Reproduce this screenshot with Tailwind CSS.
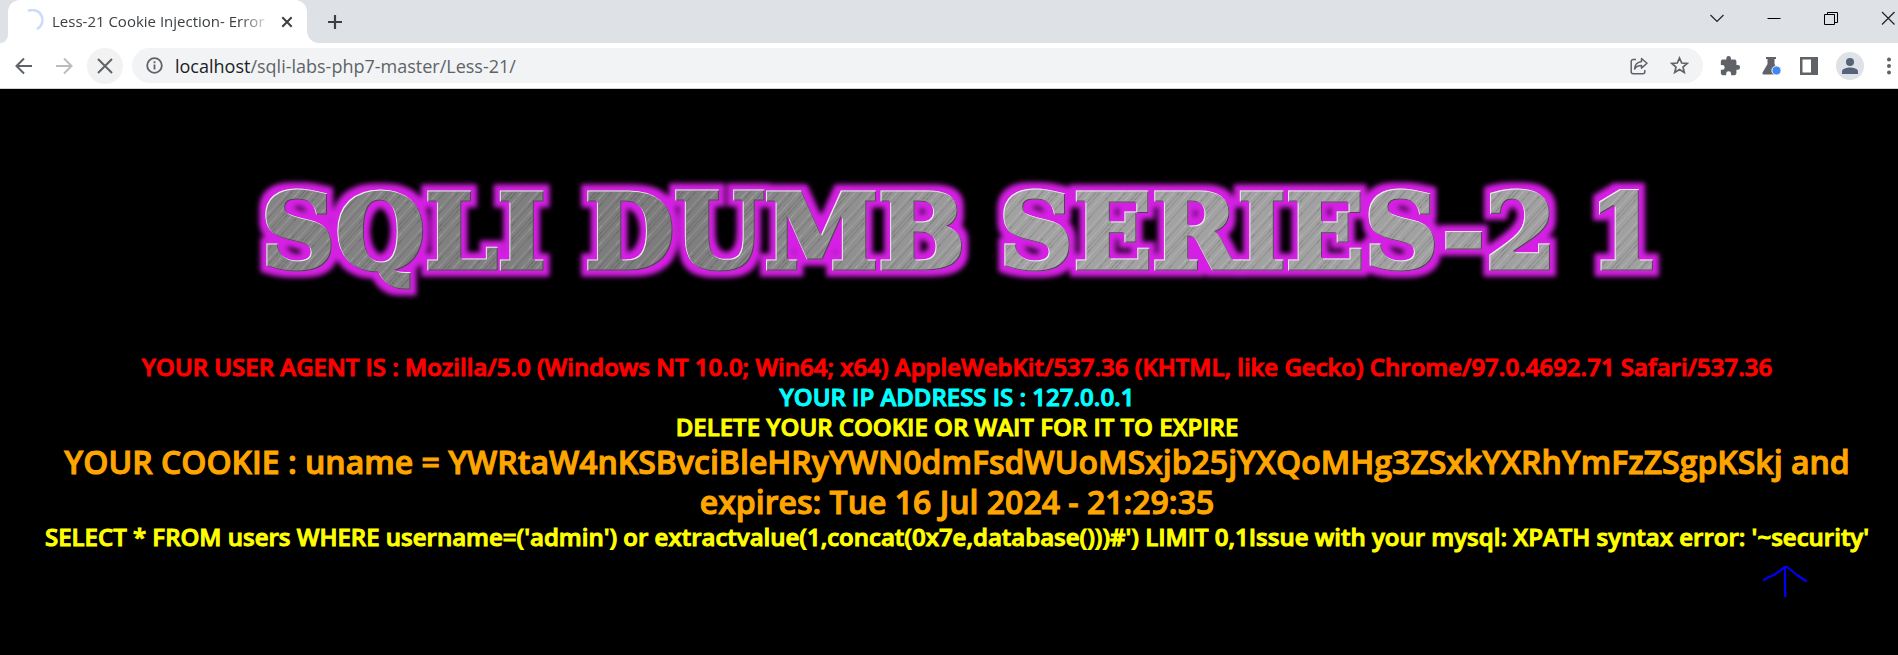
<!DOCTYPE html>
<html lang="en">
<head>
<meta charset="utf-8">
<title>Less-21 Cookie Injection- Error</title>
<script src="https://cdn.jsdelivr.net/npm/@tailwindcss/browser@4"></script>
</head>
<body class="flex min-h-screen flex-col bg-black font-['Open_Sans','Noto_Sans',sans-serif]">
<header>
  <div class="flex h-[43px] items-start justify-between bg-[#dee1e6]">
    <div class="flex h-full">
      <div class="flex w-2 items-end bg-white"><span class="h-full w-full rounded-br-lg bg-[#dee1e6]"></span></div>
      <div class="flex w-[299px] items-center rounded-t-xl bg-white pr-3 pl-3.5">
        <svg class="mb-1 size-[22px] shrink-0" viewBox="0 0 20 20" fill="none" stroke="#c9dcfb" stroke-width="2.2"><path d="M5.500 1.800A8.900 8.900 0 1 1 13.500 18.200"/></svg>
        <span class="ml-2 flex-1 overflow-hidden text-[15px] whitespace-nowrap text-[#3c4043] [mask-image:linear-gradient(to_right,black_86%,transparent)]">Less-21 Cookie Injection- Error</span>
        <button aria-label="Close tab" class="ml-2 grid size-4 place-items-center"><svg class="size-4" viewBox="0 0 16 16" fill="none" stroke="#3c4043" stroke-width="2"><path d="M3.300 3.300l9.400 9.400M12.700 3.300l-9.400 9.400"/></svg></button>
      </div>
      <div class="w-3 bg-white"><span class="block h-full w-full rounded-bl-xl bg-[#dee1e6]"></span></div>
      <button aria-label="New tab" class="grid h-[43px] w-[31px] place-items-center"><svg class="size-4" viewBox="0 0 16 16" fill="none" stroke="#3c4043" stroke-width="2.200"><path d="M8 1v14M1 8h14"/></svg></button>
    </div>
    <div class="flex h-9 items-center gap-[41px] pr-0.5">
      <button aria-label="Search tabs"><svg class="block size-4" viewBox="0 0 16 16" fill="none" stroke="#222" stroke-width="1.200"><path d="M1.500 5l6.500 6.500L14.500 5"/></svg></button>
      <button aria-label="Minimize"><svg class="block size-4" viewBox="0 0 16 16" stroke="#000"><path d="M1.500 8.500h13"/></svg></button>
      <button aria-label="Restore"><svg class="block size-4" viewBox="0 0 16 16" fill="none" stroke="#000"><path d="M1.500 4.500h10v10h-10zM4.500 4.500v-2h10v10h-3"/></svg></button>
      <button aria-label="Close"><svg class="block size-4" viewBox="0 0 16 16" stroke="#222" stroke-width="1.200"><path d="M2 2l12.500 12.500M14.500 2L2 14.500"/></svg></button>
    </div>
  </div>
  <div class="flex h-[46px] items-center border-b border-[#cfd2d6] bg-white">
    <button aria-label="Back" class="ml-3.5 grid size-5 place-items-center"><svg class="size-5" viewBox="0 0 20 20" fill="none" stroke="#5f6368" stroke-width="2"><path d="M18 10H3M10 2.500L2.500 10l7.500 7.500"/></svg></button>
    <button aria-label="Forward" class="ml-5 grid size-5 place-items-center"><svg class="size-5" viewBox="0 0 20 20" fill="none" stroke="#babcbe" stroke-width="2"><path d="M2 10h15M10 2.500l7.500 7.500-7.500 7.500"/></svg></button>
    <button aria-label="Stop" class="ml-[13px] grid size-9 place-items-center rounded-full bg-[#f2f2f2]"><svg class="size-5" viewBox="0 0 20 20" fill="none" stroke="#5f6368" stroke-width="2"><path d="M3 3l14 14M17 3L3 17"/></svg></button>
    <div class="ml-[9px] flex h-[35px] flex-1 items-center rounded-full bg-[#f1f3f4] pr-3.5 pl-3.5">
      <svg class="size-[17px] shrink-0" viewBox="0 0 17 17" fill="none" stroke="#5f6368" stroke-width="1.800"><circle cx="8.500" cy="8.500" r="7.300"/><path d="M8.500 7.500v5M8.500 4.300v1.900"/></svg>
      <div class="ml-3 flex-1 text-lg/7 whitespace-nowrap text-[#5f6368]"><span class="text-[#202124]">localhost</span>/sqli-labs-php7-master/Less-21/</div>
      <button aria-label="Share"><svg class="block size-[18px]" viewBox="0 0 18 18" fill="none" stroke="#5f6368" stroke-width="1.500"><path d="M6 2.500H3.200A2 2 0 0 0 1.200 4.500v10.300a2 2 0 0 0 2 2h9.600a2 2 0 0 0 2-2V13"/><path stroke-linejoin="round" d="M11.500 1.500l5.500 4.800-5.500 4.800V8.500C8 8.500 6 9.700 4.600 12c.3-4 2.500-7 6.900-7.600z"/></svg></button>
      <button aria-label="Bookmark" class="ml-[22px]"><svg class="block size-[19px]" viewBox="0 0 19 19" fill="none" stroke="#5f6368" stroke-width="1.700"><path d="M9.500 2l2.200 5 5.500.5-4.200 3.600 1.300 5.400-4.800-2.900-4.800 2.900L6 11.100 1.800 7.500l5.500-.5z"/></svg></button>
    </div>
    <div class="ml-4 flex items-center">
      <button aria-label="Extensions"><svg class="block size-[22px]" viewBox="0 0 24 24" fill="#5f6368"><path d="M20.500 11H19V7a2 2 0 0 0-2-2h-4V3.500a2.500 2.500 0 0 0-5 0V5H4a2 2 0 0 0-2 2v3.800h1.500a2.700 2.700 0 0 1 0 5.400H2V20a2 2 0 0 0 2 2h3.800v-1.500a2.700 2.700 0 0 1 5.400 0V22H17a2 2 0 0 0 2-2v-4h1.500a2.500 2.500 0 0 0 0-5z"/></svg></button>
      <button aria-label="Chrome Labs" class="ml-5"><svg class="block size-5" viewBox="0 0 20 20"><path fill="#5f6368" d="M5 1h10v2h-1.500v5l4.800 8.300q1 2.200-1.200 2.200H2.900q-2.200 0-1.200-2.200L6.500 8V3H5z"/><circle cx="15.500" cy="14.500" r="4.600" fill="#4285f4" stroke="#fff"/></svg></button>
      <button aria-label="Side panel" class="ml-[19px]"><svg class="block size-[18px]" viewBox="0 0 18 18" fill="#5f6368"><path fill-rule="evenodd" d="M0 0h18v18H0zM2.500 2.500v13h8.500v-13z"/></svg></button>
      <button aria-label="Profile" class="ml-[18px] grid size-7 place-items-center rounded-full bg-[#dee1e6]"><svg class="size-4" viewBox="0 0 16 16" fill="#56617a"><circle cx="8" cy="4" r="4"/><path d="M0 16v-2.500C0 10.500 5 9.500 8 9.500s8 1 8 4V16z"/></svg></button>
      <button aria-label="Menu" class="ml-4"><svg class="block size-[18px]" viewBox="0 0 18 18" fill="#5f6368"><circle cx="9" cy="2.500" r="2"/><circle cx="9" cy="9" r="2"/><circle cx="9" cy="15.500" r="2"/></svg></button>
    </div>
  </div>
</header>
<main class="flex-1 pt-[71px] pr-2 pl-6 text-center text-2xl/[30px] font-semibold">
  <h1>
    <svg class="mx-auto block w-[1440px] max-w-full" viewBox="240 160 1440 150">
      <defs>
        <linearGradient id="metal" gradientUnits="userSpaceOnUse" x1="240" y1="0" x2="1680" y2="0"><stop offset="0" stop-color="#858585"/><stop offset=".3" stop-color="#7c7c7c"/><stop offset=".55" stop-color="#a2a3a2"/><stop offset="1" stop-color="#a0a0a0"/></linearGradient>
        <filter id="plate" filterUnits="userSpaceOnUse" x="240" y="160" width="1440" height="150" color-interpolation-filters="sRGB">
          <feMorphology in="SourceAlpha" operator="dilate" radius="6" result="wide"/>
          <feGaussianBlur in="wide" stdDeviation="2.500" result="soft"/>
          <feFlood flood-color="#d61fe4"/><feComposite in2="soft" operator="in" result="glow"/>
          <feOffset in="SourceAlpha" dx="1" dy="1" result="in1"/>
          <feFlood flood-color="#f6e6fa"/><feComposite in2="SourceAlpha" operator="in"/><feComposite in2="in1" operator="out" result="hi"/>
          <feOffset in="SourceAlpha" dx="-1" dy="-1" result="in2"/>
          <feFlood flood-color="#5a3a60"/><feComposite in2="SourceAlpha" operator="in"/><feComposite in2="in2" operator="out" result="lo"/>
          <feMerge><feMergeNode in="glow"/><feMergeNode in="SourceGraphic"/><feMergeNode in="lo"/><feMergeNode in="hi"/></feMerge>
        </filter>
        <pattern id="brush" width="31" height="40" patternUnits="userSpaceOnUse" patternTransform="rotate(42)">
          <path stroke="#fff" stroke-opacity=".12" d="M3.500 0v40M11.500 0v40M22.500 0v40"/><path stroke="#000" stroke-opacity=".1" d="M6.500 0v40M15.500 0v40M18.500 0v40M27.500 0v40"/>
        </pattern>
      </defs>
      <g filter="url(#plate)" class="font-['DejaVu_Serif',serif] text-[103px] font-bold">
        <g fill="url(#metal)" stroke="url(#metal)" stroke-width="5"><text x="264" y="268">SQLI</text><text x="588" y="268">DUMB</text><text x="1002" y="268">SERIES-2</text><text x="1592" y="268">1</text></g>
        <g fill="url(#brush)" stroke="url(#brush)" stroke-width="5" aria-hidden="true"><text x="264" y="268">SQLI</text><text x="588" y="268">DUMB</text><text x="1002" y="268">SERIES-2</text><text x="1592" y="268">1</text></g>
      </g>
    </svg>
  </h1>
  <div class="[-webkit-text-stroke:1px_currentColor]">
    <div class="mt-[42px] text-[#ff0000]">YOUR USER AGENT IS : Mozilla/5.0 (Windows NT 10.0; Win64; x64) AppleWebKit/537.36 (KHTML, like Gecko) Chrome/97.0.4692.71 Safari/537.36</div>
    <div class="text-[#00ffff]">YOUR IP ADDRESS IS : 127.0.0.1</div>
    <div class="text-[#ffff00]">DELETE YOUR COOKIE OR WAIT FOR IT TO EXPIRE</div>
    <div class="text-[32px]/10 text-[#ffa500]">YOUR COOKIE : uname = YWRtaW4nKSBvciBleHRyYWN0dmFsdWUoMSxjb25jYXQoMHg3ZSxkYXRhYmFzZSgpKSkj and<br>expires: Tue 16 Jul 2024 - 21:29:35</div>
    <div class="text-[#ffff00]">SELECT * FROM users WHERE username=('admin') or extractvalue(1,concat(0x7e,database()))#') LIMIT 0,1Issue with your mysql: XPATH syntax error: '~security'</div>
  </div>
  <div class="flex justify-end pt-3.5 pr-20"><svg class="h-8 w-12" viewBox="0 0 48 32" fill="none" stroke="#0000f5" stroke-width="2.200" stroke-linecap="round" stroke-linejoin="round"><path d="M2 14l5-3 5-2 11-8q1-1 2 0l10 8 9 6M23 2v14l.3 14.500"/></svg></div>
</main>
</body>
</html>
